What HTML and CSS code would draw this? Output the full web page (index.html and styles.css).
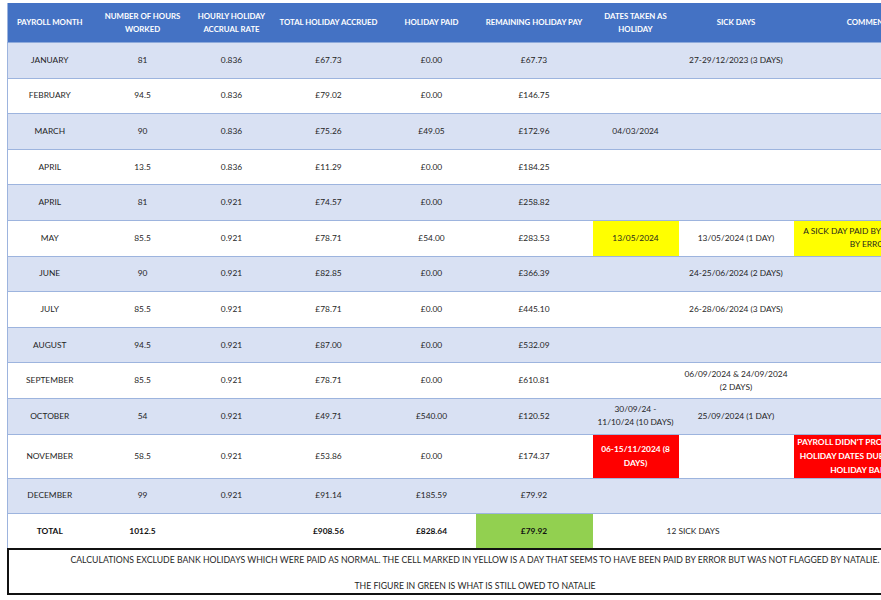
FILE: index.html
```html
<!DOCTYPE html>
<html>
<head>
<meta charset="utf-8">
<link rel="stylesheet" href="styles.css">
</head>
<body>
<div class="sheet">
<table class="payroll">
<colgroup>
<col class="c1"><col class="c2"><col class="c3"><col class="c4"><col class="c5"><col class="c6"><col class="c7"><col class="c8"><col class="c9">
</colgroup>
<thead>
<tr class="head">
<th>PAYROLL MONTH</th>
<th>NUMBER OF HOURS<br>WORKED</th>
<th>HOURLY HOLIDAY<br>ACCRUAL RATE</th>
<th>TOTAL HOLIDAY ACCRUED</th>
<th>HOLIDAY PAID</th>
<th>REMAINING HOLIDAY PAY</th>
<th>DATES TAKEN AS<br>HOLIDAY</th>
<th>SICK DAYS</th>
<th>COMMENTS</th>
</tr>
</thead>
<tbody>
<tr class="band"><td>JANUARY</td><td>81</td><td>0.836</td><td>£67.73</td><td>£0.00</td><td>£67.73</td><td></td><td>27-29/12/2023 (3 DAYS)</td><td></td></tr>
<tr><td>FEBRUARY</td><td>94.5</td><td>0.836</td><td>£79.02</td><td>£0.00</td><td>£146.75</td><td></td><td></td><td></td></tr>
<tr class="band"><td>MARCH</td><td>90</td><td>0.836</td><td>£75.26</td><td>£49.05</td><td>£172.96</td><td>04/03/2024</td><td></td><td></td></tr>
<tr><td>APRIL</td><td>13.5</td><td>0.836</td><td>£11.29</td><td>£0.00</td><td>£184.25</td><td></td><td></td><td></td></tr>
<tr class="band"><td>APRIL</td><td>81</td><td>0.921</td><td>£74.57</td><td>£0.00</td><td>£258.82</td><td></td><td></td><td></td></tr>
<tr><td>MAY</td><td>85.5</td><td>0.921</td><td>£78.71</td><td>£54.00</td><td>£283.53</td><td class="yellow">13/05/2024</td><td>13/05/2024 (1 DAY)</td><td class="yellow">A SICK DAY PAID BY HOLIDAY PAY<br>BY ERROR</td></tr>
<tr class="band"><td>JUNE</td><td>90</td><td>0.921</td><td>£82.85</td><td>£0.00</td><td>£366.39</td><td></td><td>24-25/06/2024 (2 DAYS)</td><td></td></tr>
<tr><td>JULY</td><td>85.5</td><td>0.921</td><td>£78.71</td><td>£0.00</td><td>£445.10</td><td></td><td>26-28/06/2024 (3 DAYS)</td><td></td></tr>
<tr class="band"><td>AUGUST</td><td>94.5</td><td>0.921</td><td>£87.00</td><td>£0.00</td><td>£532.09</td><td></td><td></td><td></td></tr>
<tr><td>SEPTEMBER</td><td>85.5</td><td>0.921</td><td>£78.71</td><td>£0.00</td><td>£610.81</td><td></td><td>06/09/2024 &amp; 24/09/2024<br>(2 DAYS)</td><td></td></tr>
<tr class="band"><td>OCTOBER</td><td>54</td><td>0.921</td><td>£49.71</td><td>£540.00</td><td>£120.52</td><td>30/09/24 -<br>11/10/24 (10 DAYS)</td><td>25/09/2024 (1 DAY)</td><td></td></tr>
<tr class="tall"><td>NOVEMBER</td><td>58.5</td><td>0.921</td><td>£53.86</td><td>£0.00</td><td>£174.37</td><td class="red">06-15/11/2024 (8<br>DAYS)</td><td></td><td class="red">PAYROLL DIDN'T PROCESS THESE AS<br>HOLIDAY DATES DUE TO NO MORE<br>HOLIDAY BALANCE.</td></tr>
<tr class="band"><td>DECEMBER</td><td>99</td><td>0.921</td><td>£91.14</td><td>£185.59</td><td>£79.92</td><td></td><td></td><td></td></tr>
<tr class="total"><td>TOTAL</td><td>1012.5</td><td></td><td>£908.56</td><td>£828.64</td><td class="green">£79.92</td><td colspan="2" class="plain">12 SICK DAYS</td><td></td></tr>
</tbody>
</table>
<div class="note">
<p>CALCULATIONS EXCLUDE BANK HOLIDAYS WHICH WERE PAID AS NORMAL. THE CELL MARKED IN YELLOW IS A DAY THAT SEEMS TO HAVE BEEN PAID BY ERROR BUT WAS NOT FLAGGED BY NATALIE.</p>
<p>THE FIGURE IN GREEN IS WHAT IS STILL OWED TO NATALIE</p>
</div>
</div>
</body>
</html>
```
FILE: styles.css
```css
html, body {
  margin: 0;
  padding: 0;
  background: #ffffff;
  overflow: hidden;
}
body {
  font-family: Lato, "Open Sans", sans-serif;
  color: #1f1f1f;
}
.sheet {
  padding: 3px 0 0 7px;
  width: 940px;
}
.payroll {
  border-collapse: collapse;
  table-layout: fixed;
  width: 938px;
  font-size: 8.4px;
}
.c1 { width: 84px; }
.c2 { width: 102px; }
.c3 { width: 76px; }
.c4 { width: 118px; }
.c5 { width: 88px; }
.c6 { width: 117px; }
.c7 { width: 86px; }
.c8 { width: 115px; }
.c9 { width: 152px; }
.payroll th {
  background: #4472c4;
  color: #ffffff;
  font-weight: 700;
  font-size: 7.8px;
  line-height: 13px;
  height: 39px;
  padding: 0 2px;
  text-align: center;
  border-bottom: 1px solid #8eaadb;
}
.payroll td {
  height: 34.6px;
  padding: 0 2px;
  text-align: center;
  line-height: 13px;
  border-bottom: 1px solid #9db4de;
}
.payroll tr td:first-child,
.payroll tr th:first-child {
  border-left: 1px solid #9db4de;
}
.payroll tr.band td {
  background: #d9e1f3;
}
.payroll tr.tall td {
  height: 43px;
  line-height: 14px;
}
.payroll tr.total td {
  height: 34px;
  font-weight: 700;
  color: #111;
  border-bottom: none;
}
.payroll tr.total td.plain {
  font-weight: 400;
  color: #1f1f1f;
}
.payroll td.yellow {
  background: #ffff00;
}
.payroll td.red {
  background: #ff0000;
  color: #ffffff;
  font-weight: 700;
}
.payroll td.green {
  background: #92d050;
}
.note {
  box-sizing: border-box;
  width: 936px;
  height: 47px;
  border: 2px solid #111;
  font-size: 8.7px;
  color: #1f1f1f;
  text-align: center;
  padding-top: 5px;
}
.note p {
  margin: 0 0 16px 0;
  line-height: 10px;
}
```
